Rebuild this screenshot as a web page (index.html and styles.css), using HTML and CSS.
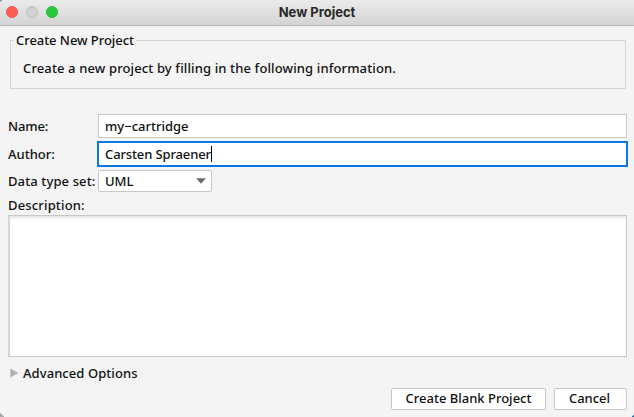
FILE: index.html
```html
<!DOCTYPE html>
<html lang="en">
<head>
<meta charset="utf-8">
<title>New Project</title>
<link rel="stylesheet" href="styles.css">
</head>
<body>
<div class="window">
  <header class="titlebar">
    <div class="lights"><span class="light close"></span><span class="light minimize"></span><span class="light zoom"></span></div>
    <h1 class="title">New Project</h1>
  </header>
  <main class="content">
    <section class="group">
      <h2 class="legend"><span class="t-legend">Create New Project</span></h2>
      <p class="intro"><span class="t-intro">Create a new project by filling in the following information.</span></p>
    </section>
    <div class="form">
      <div class="row"><span class="label"><span class="t-name">Name:</span></span><div class="field"><span class="t-cartridge">my−cartridge</span></div></div>
      <div class="row row-author"><span class="label"><span class="t-author">Author:</span></span><div class="field focused"><span class="t-carsten">Carsten Spraener</span><i class="caret"></i></div></div>
      <div class="row row-type"><span class="label"><span class="t-type">Data type set:</span></span><div class="select"><span class="t-uml">UML</span><svg class="arrow" width="10" height="6" viewBox="0 0 10 6"><path d="M0 0.3H10L5 5.8Z"/></svg></div></div>
    </div>
    <div class="desc-label"><span class="t-desc">Description:</span></div>
    <div class="textarea"></div>
    <div class="advanced"><svg class="disclosure" width="9" height="10" viewBox="0 0 9 10"><path d="M0.3 0.5V9.5L8.4 5Z"/></svg><span class="t-adv">Advanced Options</span></div>
    <footer class="buttons"><div class="button create"><span class="t-create">Create Blank Project</span></div><div class="button cancel"><span class="t-cancel">Cancel</span></div></footer>
  </main>
  <i class="corner corner-top"></i><i class="corner corner-left"></i><i class="corner corner-right"></i>
</div>
</body>
</html>
```

FILE: styles.css
```css
* { box-sizing: border-box; }
body { margin: 0; font: 500 13px/16px "Noto Sans", "Open Sans", sans-serif; color: #111; }
h1, h2, p { margin: 0; font: inherit; }
span { white-space: nowrap; }
svg { display: block; flex: none; }
.window { position: relative; width: 634px; height: 417px; overflow: hidden; background: #f4f4f4; }
.titlebar { display: grid; grid-template-columns: 80px 1fr 80px; height: 26px; border-bottom: 1px solid #b8b8b8; background: linear-gradient(#ebebeb, #d4d4d4); }
.lights { display: flex; gap: 8px; padding: 6px 0 0 6px; }
.light { width: 12px; height: 12px; border-radius: 50%; }
.close { background: #ff5c54; border: 1px solid #f2564f; }
.minimize { background: #d1d1d1; border: 1px solid #bdbdbd; }
.zoom { background: #27c93f; border: 1px solid #25bd3b; }
.title { padding-top: 4px; text-align: center; font: 700 13px/16px Inter, sans-serif; color: #282828; }
.content { display: flex; flex-direction: column; padding: 14px 7px 0 8px; }
.group { height: 49px; margin: 0 1px 0 2px; border: 1px solid #d5d5d5; }
.legend { width: 122px; margin: -9px 0 0 3px; padding-left: 2px; background: #f4f4f4; }
.intro { margin: 12px 0 0 12px; }
.t-legend { letter-spacing: -0.05px; }
.t-intro { letter-spacing: 0.13px; }
.t-name { letter-spacing: -0.15px; }
.t-type { letter-spacing: 0.12px; }
.t-carsten { letter-spacing: -0.13px; }
.t-desc { letter-spacing: 0.16px; }
.t-adv { letter-spacing: 0.07px; }
.form { margin-top: 25px; display: flex; flex-direction: column; }
.row { display: flex; height: 24px; align-items: center; }
.label { width: 90px; flex: none; }
.field { position: relative; display: flex; align-items: center; flex: 1; height: 24px; padding-left: 6px; border: 1px solid #c8c8c8; background: #fff; }
.row-author { height: 26px; margin-top: 3px; }
.focused { height: 26px; margin: 0 -1px; border: 2px solid #0879e4; }
.caret { width: 1px; height: 16px; background: #000; }
.row-type { height: 22px; margin-top: 3px; }
.select { display: flex; align-items: center; justify-content: space-between; width: 114px; height: 22px; padding: 0 5px 0 6px; border: 1px solid #c8c8c8; border-radius: 2px; background: #fff; }
.arrow { fill: #6e6e6e; }
.desc-label { margin-top: 5px; height: 18px; }
.textarea { height: 142px; border: 1px solid #c8c8c8; border-left: 2px solid #d5d5d5; background: #fff; box-shadow: inset 0 3px 3px -1px #e5e5e5; }
.advanced { display: flex; align-items: center; gap: 4px; height: 16px; margin-top: 8px; padding-left: 2px; }
.disclosure { fill: #b1b1b1; }
.buttons { display: flex; justify-content: flex-end; gap: 8px; margin-top: 7px; }
.button { display: flex; align-items: center; justify-content: center; height: 22px; padding-bottom: 2px; border: 1px solid #c8c8c8; border-radius: 2px; background: #fff; }
.create { width: 155px; }
.cancel { width: 73px; padding-right: 2px; }
.corner { position: absolute; }
.corner-top { left: 0; top: 0; width: 2px; height: 2px; background: linear-gradient(135deg, #999 50%, transparent 50%); }
.corner-left { left: 0; bottom: 0; width: 4px; height: 4px; background: linear-gradient(45deg, #aaa 50%, transparent 50%); }
.corner-right { right: 0; bottom: 0; width: 2px; height: 2px; background: linear-gradient(315deg, #1979b9 50%, transparent 50%); }
```
